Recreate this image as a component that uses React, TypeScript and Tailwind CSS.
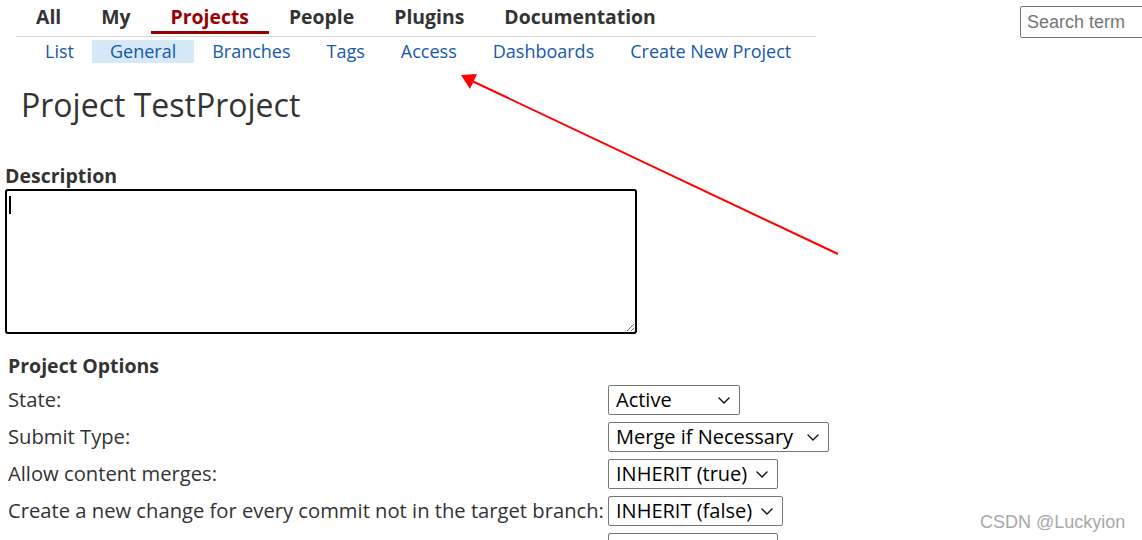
import React from "react";

const TABS = ["All", "My", "Projects", "People", "Plugins", "Documentation"];
const SUBTABS = ["List", "General", "Branches", "Tags", "Access", "Dashboards", "Create New Project"];

const OPTIONS = [
  { label: "State:", value: "Active", width: "w-[132px]" },
  { label: "Submit Type:", value: "Merge if Necessary", width: "w-[221px]" },
  { label: "Allow content merges:", value: "INHERIT (true)", width: "w-[170px]" },
  { label: "Create a new change for every commit not in the target branch:", value: "INHERIT (false)", width: "w-[175px]" },
  { label: "Require Change-Id in commit message:", value: "INHERIT (true)", width: "w-[170px]" },
];

function FakeSelect({ value, width }: { value: string; width: string }) {
  return (
    <div
      className={`${width} h-[30px] flex items-center justify-between pl-[7px] pr-[8px] border border-[#767676] rounded-[2px] bg-white text-black text-[20px]`}
    >
      <span className="whitespace-nowrap leading-none">{value}</span>
      <svg className="w-[14px] h-[14px] flex-shrink-0" viewBox="0 0 14 14" fill="none" aria-hidden="true">
        <path d="M2 5l5 5 5-5" stroke="#111" strokeWidth={1.4} strokeLinecap="round" strokeLinejoin="round" />
      </svg>
    </div>
  );
}

export default function App() {
  return (
    <div
      className="relative w-[1142px] h-[540px] overflow-hidden bg-white text-[#333]"
      style={{ fontFamily: '"Open Sans", "Noto Sans", sans-serif' }}
    >
      <header className="flex items-start">
        <nav className="ml-4 w-[800px] flex-shrink-0">
          <ul className="flex h-[37px] border-b border-[#dcdcdc]">
            {TABS.map((t) => (
              <li
                key={t}
                className={`px-5 h-[34px] flex items-center whitespace-nowrap text-[19.4px] font-bold ${
                  t === "Projects" ? "text-[#990000] border-b-[3px] border-[#990000] pt-[3px]" : "text-[#333]"
                }`}
              >
                {t}
              </li>
            ))}
          </ul>
          <ul className="flex pl-[11px] pt-[3px]">
            {SUBTABS.map((t) => (
              <li
                key={t}
                className={`px-[18px] h-[23px] flex items-center whitespace-nowrap text-[18px] text-[#1558ac] ${
                  t === "General" ? "bg-[#d6e9f8]" : ""
                }`}
              >
                {t}
              </li>
            ))}
          </ul>
        </nav>
        <input
          type="text"
          placeholder="Search term"
          className="ml-[204px] mt-[6px] w-[140px] h-[32px] flex-shrink-0 border border-[#767676] rounded-[2px] px-[6px] text-[18px] placeholder-[#757575]"
          style={{ fontFamily: '"Liberation Sans", Arial, sans-serif' }}
        />
      </header>

      <h1 className="ml-[21px] mt-[22px] text-[32px] leading-[40px] text-[#333]">Project TestProject</h1>

      <section className="mt-[39px] ml-[5px]">
        <div className="text-[19.5px] font-bold leading-[24px]">Description</div>
        <div className="relative mt-[1px] w-[632px] h-[145px]">
          <textarea className="w-full h-full border-2 border-black rounded-[3px] bg-white outline-none" />
          <span className="absolute left-[4px] top-[7px] w-[2px] h-[18px] bg-black" />
        </div>
      </section>

      <section className="ml-[8px] mt-[19px]">
        <div className="text-[19.5px] font-bold leading-[26px]">Project Options</div>
        <div className="grid grid-cols-[600px_auto] auto-rows-[37px] items-center mt-[2px]">
          {OPTIONS.map((o) => (
            <React.Fragment key={o.label}>
              <div className="text-[20.2px] whitespace-nowrap">{o.label}</div>
              <FakeSelect value={o.value} width={o.width} />
            </React.Fragment>
          ))}
        </div>
      </section>

      <svg className="absolute left-0 top-0 pointer-events-none" width="1142" height="540" aria-hidden="true">
        <line x1="838" y1="254" x2="472" y2="81" stroke="#ff0000" strokeWidth={2} />
        <polygon points="461,75 477,74 470,89" fill="#ff0000" />
      </svg>

      <div
        className="absolute left-[980px] top-[509px] text-[18px] text-[#a8a8a8]"
        style={{ fontFamily: '"Liberation Sans", Arial, sans-serif' }}
      >
        CSDN @Luckyion
      </div>
    </div>
  );
}
